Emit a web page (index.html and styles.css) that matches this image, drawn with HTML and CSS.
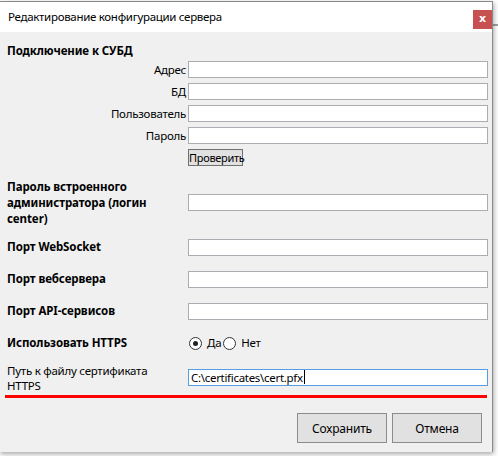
FILE: index.html
```html
<!DOCTYPE html>
<html lang="ru">
<head>
<meta charset="utf-8">
<title>Редактирование конфигурации сервера</title>
<link rel="stylesheet" href="styles.css">
</head>
<body>
<div class="dialog">
  <div class="titlebar">
    <span class="title">Редактирование конфигурации сервера</span>
    <span class="close">x</span>
  </div>
  <div class="content">
    <div class="section-title">Подключение к СУБД</div>
    <div class="db-grid">
      <label class="db-label">Адрес</label><span class="field"></span>
      <label class="db-label">БД</label><span class="field"></span>
      <label class="db-label">Пользователь</label><span class="field"></span>
      <label class="db-label">Пароль</label><span class="field"></span>
      <span></span><span class="check-wrap"><span class="check-btn">Проверить</span></span>
    </div>
    <div class="form-row row-admin">
      <span class="bold-label">Пароль встроенного<br>администратора (логин<br>center)</span>
      <span class="field"></span>
    </div>
    <div class="form-row">
      <span class="bold-label">Порт WebSocket</span>
      <span class="field"></span>
    </div>
    <div class="form-row">
      <span class="bold-label">Порт вебсервера</span>
      <span class="field"></span>
    </div>
    <div class="form-row">
      <span class="bold-label">Порт API-сервисов</span>
      <span class="field"></span>
    </div>
    <div class="form-row">
      <span class="bold-label">Использовать HTTPS</span>
      <span class="radios">
        <span class="radio checked"></span><span class="radio-text">Да</span>
        <span class="radio"></span><span class="radio-text">Нет</span>
      </span>
    </div>
    <div class="form-row row-path">
      <span class="plain-label">Путь к файлу сертификата<br>HTTPS</span>
      <span class="field focused"><span class="value">C:\certificates\cert.pfx</span><span class="caret"></span></span>
    </div>
    <div class="divider"></div>
    <div class="actions">
      <span class="btn">Сохранить</span>
      <span class="btn">Отмена</span>
    </div>
  </div>
</div>
</body>
</html>
```
FILE: styles.css
```css
html, body {
  margin: 0;
  padding: 0;
}
body {
  width: 498px;
  height: 456px;
  overflow: hidden;
  position: relative;
  font-family: "Noto Sans", "Open Sans", sans-serif;
  font-size: 11.5px;
  letter-spacing: -0.25px;
  color: #000;
  background: linear-gradient(#ffffff 24px, #a0a0a0 24px, #a0a0a0 26px, #ffffff 26px);
}
.dialog {
  position: absolute;
  top: 1px;
  left: -1px;
  width: 494px;
  height: 451px;
  border: 1px solid #8a8a8a;
  border-bottom: none;
  box-sizing: border-box;
  background: #f0f0f0;
  box-shadow: 1px 2px 5px rgba(0, 0, 0, 0.35);
  display: flex;
  flex-direction: column;
}
.titlebar {
  height: 30px;
  background: #fff;
  position: relative;
  display: flex;
  align-items: center;
  padding-left: 8px;
  flex: none;
}
.title {
  font-size: 11.5px;
  line-height: 16px;
  margin-top: -1px;
  letter-spacing: -0.3px;
}
.close {
  position: absolute;
  right: 0;
  top: 8px;
  width: 19px;
  height: 19px;
  background: #c75050;
  color: #fff;
  font-weight: bold;
  font-size: 11px;
  letter-spacing: 0;
  line-height: 17px;
  text-align: center;
  font-family: "DejaVu Sans", sans-serif;
}
.content {
  padding: 0 0 0 7px;
  flex: 1;
}
.section-title {
  font-weight: bold;
  letter-spacing: -0.1px;
  line-height: 16px;
  margin-top: 11px;
  margin-bottom: 2px;
}
.db-grid {
  display: grid;
  grid-template-columns: 179px 300px;
  column-gap: 2px;
  grid-auto-rows: 17px;
  row-gap: 5px;
}
.db-label {
  text-align: right;
  line-height: 17px;
  white-space: nowrap;
}
.field {
  display: flex;
  align-items: center;
  height: 17px;
  width: 300px;
  box-sizing: border-box;
  background: #fff;
  border: 1px solid #abadb3;
  padding-left: 2px;
}
.field.focused {
  border-color: #569de5;
}
.value {
  line-height: 15px;
  letter-spacing: -0.3px;
}
.caret {
  display: inline-block;
  width: 1px;
  height: 14px;
  background: #000;
  margin-left: 1px;
}
.check-wrap {
  height: 17px;
}
.check-btn {
  display: inline-block;
  height: 17px;
  box-sizing: border-box;
  width: 55px;
  border: 1px solid #707070;
  background: #e1e1e1;
  font-size: 11px;
  line-height: 15px;
  text-align: center;
  letter-spacing: -0.3px;
}
.form-row {
  display: grid;
  grid-template-columns: 179px 300px;
  column-gap: 2px;
  align-items: center;
  height: 32px;
}
.row-admin {
  height: 57px;
  margin-top: 8px;
}
.row-path {
  height: 36px;
}
.bold-label {
  font-weight: bold;
  letter-spacing: -0.1px;
  line-height: 16px;
}
.plain-label {
  line-height: 15px;
  padding-top: 2px;
}
.radios {
  display: flex;
  align-items: center;
  padding-left: 1px;
}
.radio {
  width: 13px;
  height: 13px;
  box-sizing: border-box;
  border: 1px solid #333;
  border-radius: 50%;
  background: #fff;
  position: relative;
}
.radio.checked::after {
  content: "";
  position: absolute;
  left: 3px;
  top: 3px;
  width: 5px;
  height: 5px;
  border-radius: 50%;
  background: #222;
}
.radio-text {
  margin-left: 5px;
  margin-right: 2px;
  line-height: 16px;
}
.divider {
  height: 3px;
  background: #ff0000;
  width: 482px;
  margin-left: -2px;
}
.actions {
  display: flex;
  justify-content: flex-end;
  gap: 5px;
  padding-right: 10px;
  margin-top: 15px;
}
.btn {
  width: 90px;
  height: 30px;
  box-sizing: border-box;
  border: 1px solid #8c8c8c;
  background: #e1e1e1;
  display: flex;
  align-items: center;
  justify-content: center;
  font-size: 12px;
  letter-spacing: -0.2px;
}
```
